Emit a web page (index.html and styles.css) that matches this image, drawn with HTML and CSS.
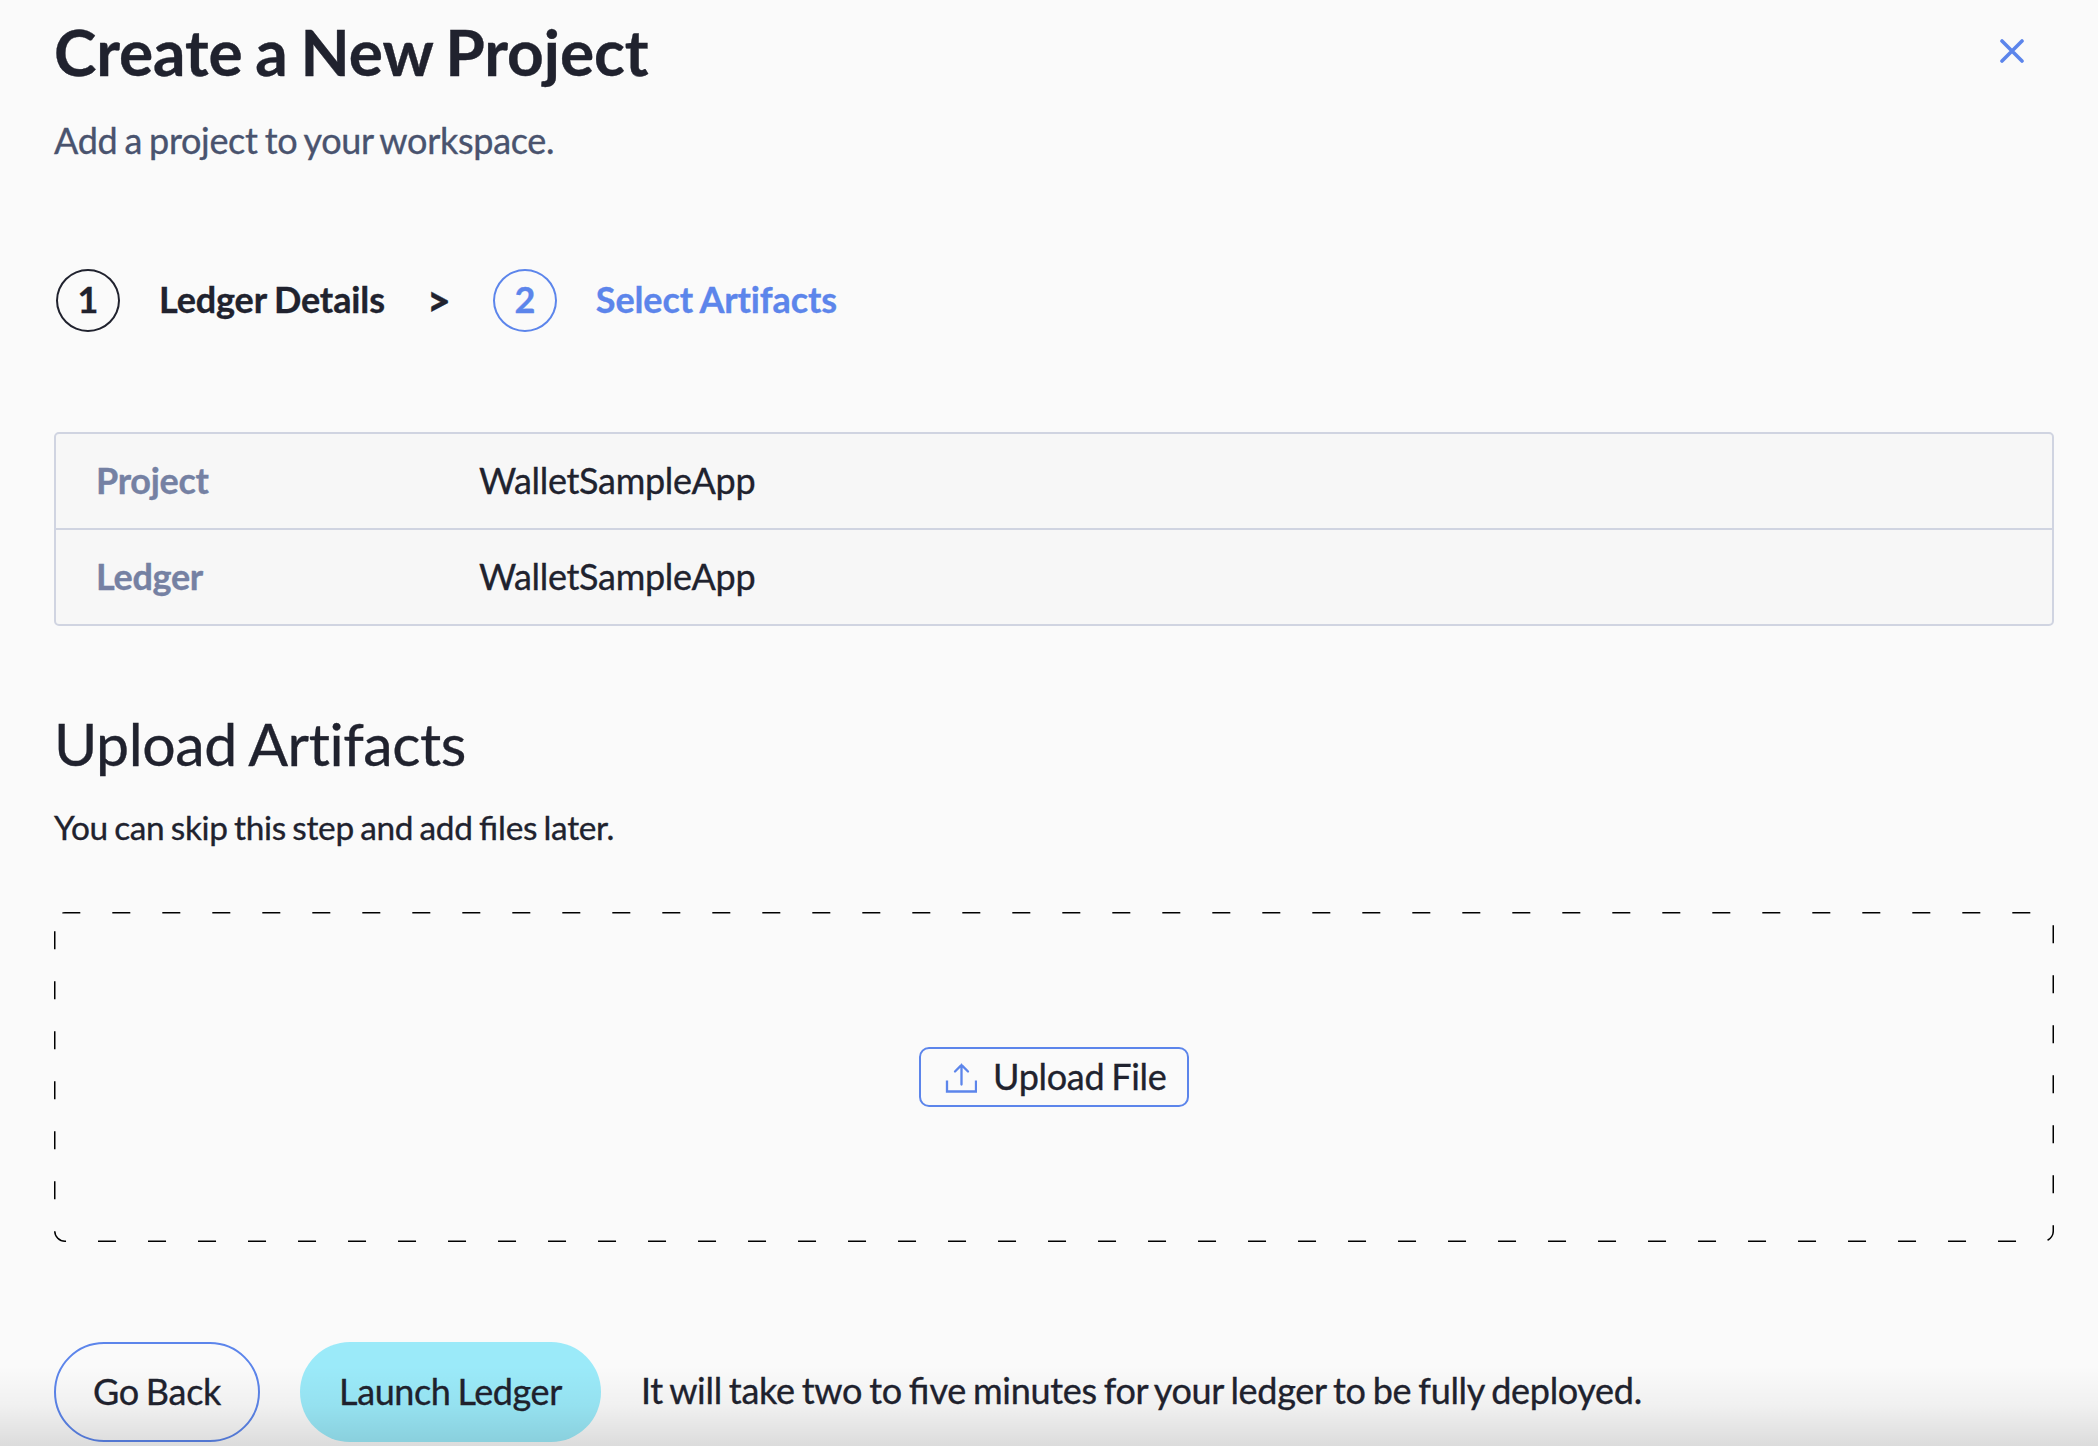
FILE: index.html
```html
<!DOCTYPE html>
<html lang="en">
<head>
<meta charset="utf-8">
<title>Create a New Project</title>
<link rel="stylesheet" href="styles.css">
</head>
<body>
<main class="page">
  <header class="header">
    <div>
      <h1 class="title">Create a New Project</h1>
      <p class="subtitle">Add a project to your workspace.</p>
    </div>
    <button class="close" aria-label="Close">
      <svg width="24" height="24" viewBox="0 0 24 24"><path d="M2 2l20 20M22 2L2 22"/></svg>
    </button>
  </header>

  <nav class="steps">
    <span class="step-number">1</span>
    <span class="step-label">Ledger Details</span>
    <span class="step-arrow">&gt;</span>
    <span class="step-number active">2</span>
    <span class="step-label active">Select Artifacts</span>
  </nav>

  <dl class="summary">
    <div class="row"><dt>Project</dt><dd>WalletSampleApp</dd></div>
    <div class="row"><dt>Ledger</dt><dd>WalletSampleApp</dd></div>
  </dl>

  <h2 class="section-title">Upload Artifacts</h2>
  <p class="hint">You can skip this step and add <span class="ligature">fi</span>les later.</p>

  <section class="dropzone">
    <svg class="outline" width="2000" height="330" viewBox="0 0 2000 330"><path d="M8.300 0H1989a11 11 0 0 1 11 11V319a11 11 0 0 1-11 11H11a11 11 0 0 1-11-11V11"/></svg>
    <button class="upload">
      <svg class="upload-icon" width="32" height="32" viewBox="0 0 32 32"><path d="M2 19.500V30.500H31V19.500"/><path d="M16.500 23.500V4M10 10.500L16.500 4L23 10.500" stroke-linecap="round"/></svg>
      <span>Upload File</span>
    </button>
  </section>

  <footer class="actions">
    <button class="button back">Go Back</button>
    <button class="button launch">Launch Ledger</button>
    <span class="note">It will take two to <span class="ligature">fi</span>ve minutes for your ledger to be fully deployed.</span>
  </footer>
</main>
<div class="fade"></div>
</body>
</html>
```
FILE: styles.css
```css
* { box-sizing: border-box; margin: 0; padding: 0; }

body {
  height: 1446px;
  overflow: hidden;
  background: #fafafa;
  color: #20222e;
  font-family: Lato, sans-serif;
  font-size: 36px;
  line-height: 44px;
  letter-spacing: -0.3px;
  word-spacing: -1.9px;
  -webkit-text-stroke: 0.35px currentColor;
}

button { font: inherit; color: inherit; letter-spacing: inherit; word-spacing: inherit; background: none; border: 0; }
svg { display: block; fill: none; }
.ligature { letter-spacing: 0; }

.page { width: 2000px; margin-left: 54px; padding-top: 13px; }

.header { display: flex; justify-content: space-between; height: 256px; }
.title { font-size: 64px; line-height: 78px; font-weight: 700; letter-spacing: -0.1px; word-spacing: -2.6px; }
.subtitle { margin-top: 27px; color: #49536e; }
.close { width: 24px; height: 24px; margin: 26px 30px 0 0; }
.close path { stroke: #5c85eb; stroke-width: 3.6; stroke-linecap: round; }

.steps {
  display: flex;
  align-items: center;
  height: 63px;
  padding-left: 2px;
  font-weight: 700;
  line-height: 57px;
  letter-spacing: -0.12px;
  word-spacing: -1px;
}
.step-number {
  width: 64px;
  height: 63px;
  border: 2px solid #20222e;
  border-radius: 50%;
  text-align: center;
}
.step-number.active { border-color: #5c85eb; }
.active { color: #5c85eb; }
.step-label { margin-left: 39px; padding-bottom: 3px; }
.step-arrow { width: 108px; font-size: 41px; font-weight: 900; text-align: center; }

.summary { margin-top: 100px; border: 2px solid #d0d4e1; border-radius: 5px; background: #f7f7f7; }
.row { display: flex; align-items: center; height: 94px; padding: 0 40px 2px; }
.row + .row { height: 96px; border-top: 2px solid #d0d4e1; }
.row dt { width: 383px; color: #7581a3; font-weight: 700; }

.section-title { margin-top: 83px; font-size: 59px; line-height: 70px; font-weight: 400; letter-spacing: -0.4px; word-spacing: -1.5px; }
.hint { margin-top: 28px; font-size: 33.4px; line-height: 40px; }

.dropzone {
  display: grid;
  place-items: center;
  height: 330px;
  margin-top: 65px;
  border-radius: 11px;
  overflow: hidden;
  position: relative;
}
.outline { position: absolute; inset: 0; }
.outline path { stroke: #000; stroke-width: 3; stroke-dasharray: 18 32; }

.upload {
  display: flex;
  align-items: center;
  width: 270px;
  height: 60px;
  padding-left: 24px;
  border: 2px solid #5c85eb;
  border-radius: 10px;
}
.upload span { margin-left: 16px; padding-bottom: 2px; }
.upload-icon path { stroke: #5c85eb; stroke-width: 2.3; }

.actions { display: flex; align-items: center; margin-top: 100px; }
.button { height: 100px; border-radius: 50px; padding-bottom: 2px; }
.back { width: 206px; border: 2px solid #5c85eb; }
.launch { width: 301px; margin-left: 40px; background: #9beaf9; letter-spacing: -0.4px; }
.note { margin-left: 40px; padding-bottom: 4px; }

.fade {
  position: absolute;
  left: 0;
  right: 0;
  top: 1366px;
  height: 80px;
  background: linear-gradient(rgba(0, 0, 0, 0), rgba(0, 0, 0, .04) 50%, rgba(0, 0, 0, .12));
  pointer-events: none;
}
```
